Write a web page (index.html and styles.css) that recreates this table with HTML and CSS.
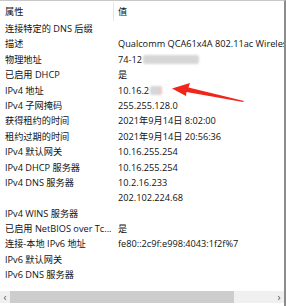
FILE: index.html
```html
<!DOCTYPE html>
<html lang="zh-CN">
<head>
<meta charset="utf-8">
<link rel="stylesheet" href="styles.css">
</head>
<body>
<div class="panel">
  <div class="list">
    <div class="row head"><div class="c1">属性</div><div class="c2 sep">值</div></div>
    <div class="row"><div class="c1">连接特定的 DNS 后缀</div><div class="c2"></div></div>
    <div class="row"><div class="c1">描述</div><div class="c2">Qualcomm QCA61x4A 802.11ac Wireless Adapter</div></div>
    <div class="row"><div class="c1">物理地址</div><div class="c2">74-12<span class="blur wide"></span></div></div>
    <div class="row"><div class="c1">已启用 DHCP</div><div class="c2">是</div></div>
    <div class="row"><div class="c1">IPv4 地址</div><div class="c2">10.16.2<span class="blur small"></span></div></div>
    <div class="row"><div class="c1">IPv4 子网掩码</div><div class="c2">255.255.128.0</div></div>
    <div class="row"><div class="c1">获得租约的时间</div><div class="c2">2021年9月14日 8:02:00</div></div>
    <div class="row"><div class="c1">租约过期的时间</div><div class="c2">2021年9月14日 20:56:36</div></div>
    <div class="row"><div class="c1">IPv4 默认网关</div><div class="c2">10.16.255.254</div></div>
    <div class="row"><div class="c1">IPv4 DHCP 服务器</div><div class="c2">10.16.255.254</div></div>
    <div class="row"><div class="c1">IPv4 DNS 服务器</div><div class="c2">10.2.16.233</div></div>
    <div class="row"><div class="c1"></div><div class="c2">202.102.224.68</div></div>
    <div class="row"><div class="c1">IPv4 WINS 服务器</div><div class="c2"></div></div>
    <div class="row"><div class="c1">已启用 NetBIOS over Tc...</div><div class="c2">是</div></div>
    <div class="row"><div class="c1">连接-本地 IPv6 地址</div><div class="c2">fe80::2c9f:e998:4043:1f2f%7</div></div>
    <div class="row"><div class="c1">IPv6 默认网关</div><div class="c2"></div></div>
    <div class="row"><div class="c1">IPv6 DNS 服务器</div><div class="c2"></div></div>
  </div>
  <div class="hscroll">
    <span class="arrow">&lsaquo;</span>
    <div class="track"><div class="thumb"></div></div>
    <span class="arrow">&rsaquo;</span>
  </div>
  <svg class="pointer" width="286" height="306" viewBox="0 0 286 306">
    <polygon points="172,88.5 190,83 188.5,87.5 244,101 243,102 186.5,92 186,96" fill="#f0261c"/>
  </svg>
</div>
</body>
</html>
```
FILE: styles.css
```css
html, body {
  margin: 0;
  padding: 0;
  background: #ffffff;
}
body {
  width: 286px;
  height: 306px;
  overflow: hidden;
  font-family: "Segoe UI", "Open Sans", "Noto Sans", "Noto Sans CJK SC", sans-serif;
  font-size: 9.2px;
  color: #111111;
}
.panel {
  position: relative;
  width: 286px;
  height: 306px;
  box-sizing: border-box;
  border-top: 1px solid #c8c8c8;
  border-right: 2px solid #8c8c8c;
  display: flex;
  flex-direction: column;
}
.list {
  flex: 1;
  overflow: hidden;
  padding-top: 1px;
}
.row {
  display: grid;
  grid-template-columns: 113px 1fr;
  height: 15.4px;
  line-height: 15.4px;
  white-space: nowrap;
}
.row.head {
  height: 19px;
  line-height: 19px;
}
.c1 {
  padding-left: 5px;
  overflow: hidden;
}
.c2 {
  padding-left: 5px;
  overflow: hidden;
  display: flex;
  align-items: center;
}
.sep {
  border-left: 1px solid #e5e5e5;
  padding-left: 4px;
}
.blur {
  display: inline-block;
  background: #d6d6d6;
  border-radius: 2px;
  filter: blur(1px);
}
.blur.wide {
  width: 56px;
  height: 9px;
  margin-left: 1px;
}
.blur.small {
  width: 10px;
  height: 9px;
  margin-left: 1px;
  box-shadow: 2px 0 0 #f2c4c4;
}
.hscroll {
  height: 12px;
  margin-bottom: 3px;
  display: flex;
  align-items: center;
  background: #f0f0f0;
}
.arrow {
  width: 10px;
  text-align: center;
  font-size: 10px;
  line-height: 12px;
  color: #555;
}
.track {
  flex: 1;
  height: 12px;
  display: flex;
}
.thumb {
  width: 224px;
  background: #cdcdcd;
}
.pointer {
  position: absolute;
  left: 0;
  top: -1px;
}
```
